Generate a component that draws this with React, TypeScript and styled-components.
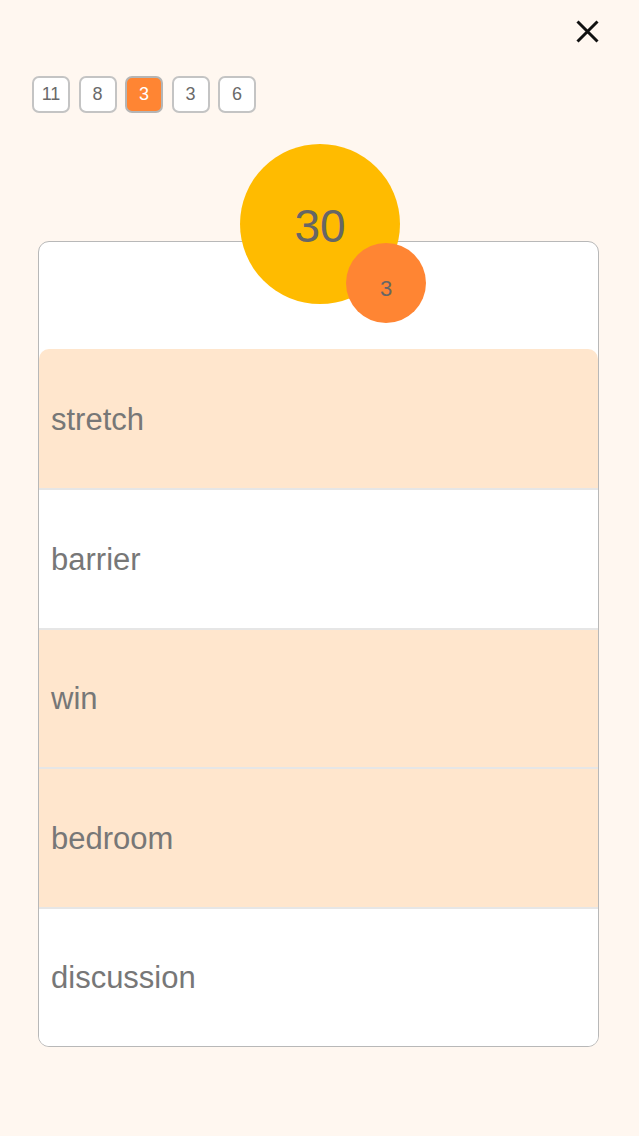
import styled, { createGlobalStyle } from "styled-components";

const GlobalStyle = createGlobalStyle`
    html, body {
        margin: 0;
        padding: 0;
        background: #fff7f0;
        font-family: "Liberation Sans", Arial, sans-serif;
    }
`

const Page = styled.div`
    width: 639px;
    min-height: 1136px;
    box-sizing: border-box;
    padding: 20px 40px 0 32px;
    display: flex;
    flex-direction: column;
`
const TopBar = styled.div`
    display: flex;
    justify-content: flex-end;
    height: 23px;
`
const CloseBtn = styled.button`
    width: 23px;
    height: 23px;
    padding: 0;
    border: none;
    background: transparent;
    cursor: pointer;
    display: flex;
`
const Pills = styled.div`
    display: flex;
    gap: 8.5px;
    margin-top: 33px;
`
const Pill = styled.div<{ $active?: boolean }>`
    width: 38px;
    height: 37px;
    box-sizing: border-box;
    border: 2px solid ${props => props.$active ? "#b5b5b5" : "#c4c4c4"};
    border-radius: 7px;
    background: ${props => props.$active ? "#ff8533" : "#fff"};
    color: ${props => props.$active ? "#fff" : "#6a6a6a"};
    font-size: 18px;
    display: flex;
    align-items: center;
    justify-content: center;
`
const CardWrap = styled.div`
    position: relative;
    margin-top: 128px;
    margin-left: 6px;
    width: 561px;
`
const Card = styled.div`
    border: 1px solid #b8b8b8;
    border-radius: 11px;
    background: #fff;
    overflow: hidden;
    padding-top: 107px;
`
const Row = styled.div<{ $hl?: boolean; $first?: boolean }>`
    height: 139.4px;
    box-sizing: border-box;
    display: flex;
    align-items: center;
    padding-left: 12px;
    padding-top: 2px;
    background: ${props => props.$hl ? "#ffe6cd" : "#fff"};
    border-top: ${props => props.$first ? "none" : "2px solid #e6e6e6"};
    border-radius: ${props => props.$first ? "10px 10px 0 0" : "0"};
    color: #777;
    font-size: 31px;
`
const Scores = styled.div`
    position: absolute;
    top: -97px;
    left: 202px;
    width: 186px;
    height: 180px;
`
const Total = styled.div`
    position: absolute;
    left: 0;
    top: 0;
    width: 160px;
    height: 160px;
    border-radius: 50%;
    background: #ffbb00;
    color: #666;
    font-size: 46px;
    display: flex;
    align-items: center;
    justify-content: center;
    padding-top: 3px;
    box-sizing: border-box;
`
const Count = styled.div`
    position: absolute;
    left: 106px;
    top: 99px;
    width: 80px;
    height: 80px;
    border-radius: 50%;
    background: #ff8533;
    color: #666;
    font-size: 22px;
    display: flex;
    align-items: center;
    justify-content: center;
    padding-top: 11px;
    box-sizing: border-box;
`

const pills = [
    { n: 11 }, { n: 8 }, { n: 3, active: true }, { n: 3 }, { n: 6 },
]
const words = [
    { text: "stretch", hl: true },
    { text: "barrier", hl: false },
    { text: "win", hl: true },
    { text: "bedroom", hl: true },
    { text: "discussion", hl: false },
]

function App() {
    return (
        <>
            <GlobalStyle />
            <Page>
                <TopBar>
                    <CloseBtn aria-label="close">
                        <svg width="23" height="23" viewBox="0 0 23 23">
                            <path d="M1.5 1.5 L21.5 21.5 M21.5 1.5 L1.5 21.5" stroke="#111" strokeWidth="3" />
                        </svg>
                    </CloseBtn>
                </TopBar>
                <Pills>
                    {pills.map((p, i) => (
                        <Pill key={i} $active={p.active}>{p.n}</Pill>
                    ))}
                </Pills>
                <CardWrap>
                    <Card>
                        {words.map((w, i) => (
                            <Row key={i} $hl={w.hl} $first={i === 0}>{w.text}</Row>
                        ))}
                    </Card>
                    <Scores>
                        <Total>30</Total>
                        <Count>3</Count>
                    </Scores>
                </CardWrap>
            </Page>
        </>
    );
}

export default App;
